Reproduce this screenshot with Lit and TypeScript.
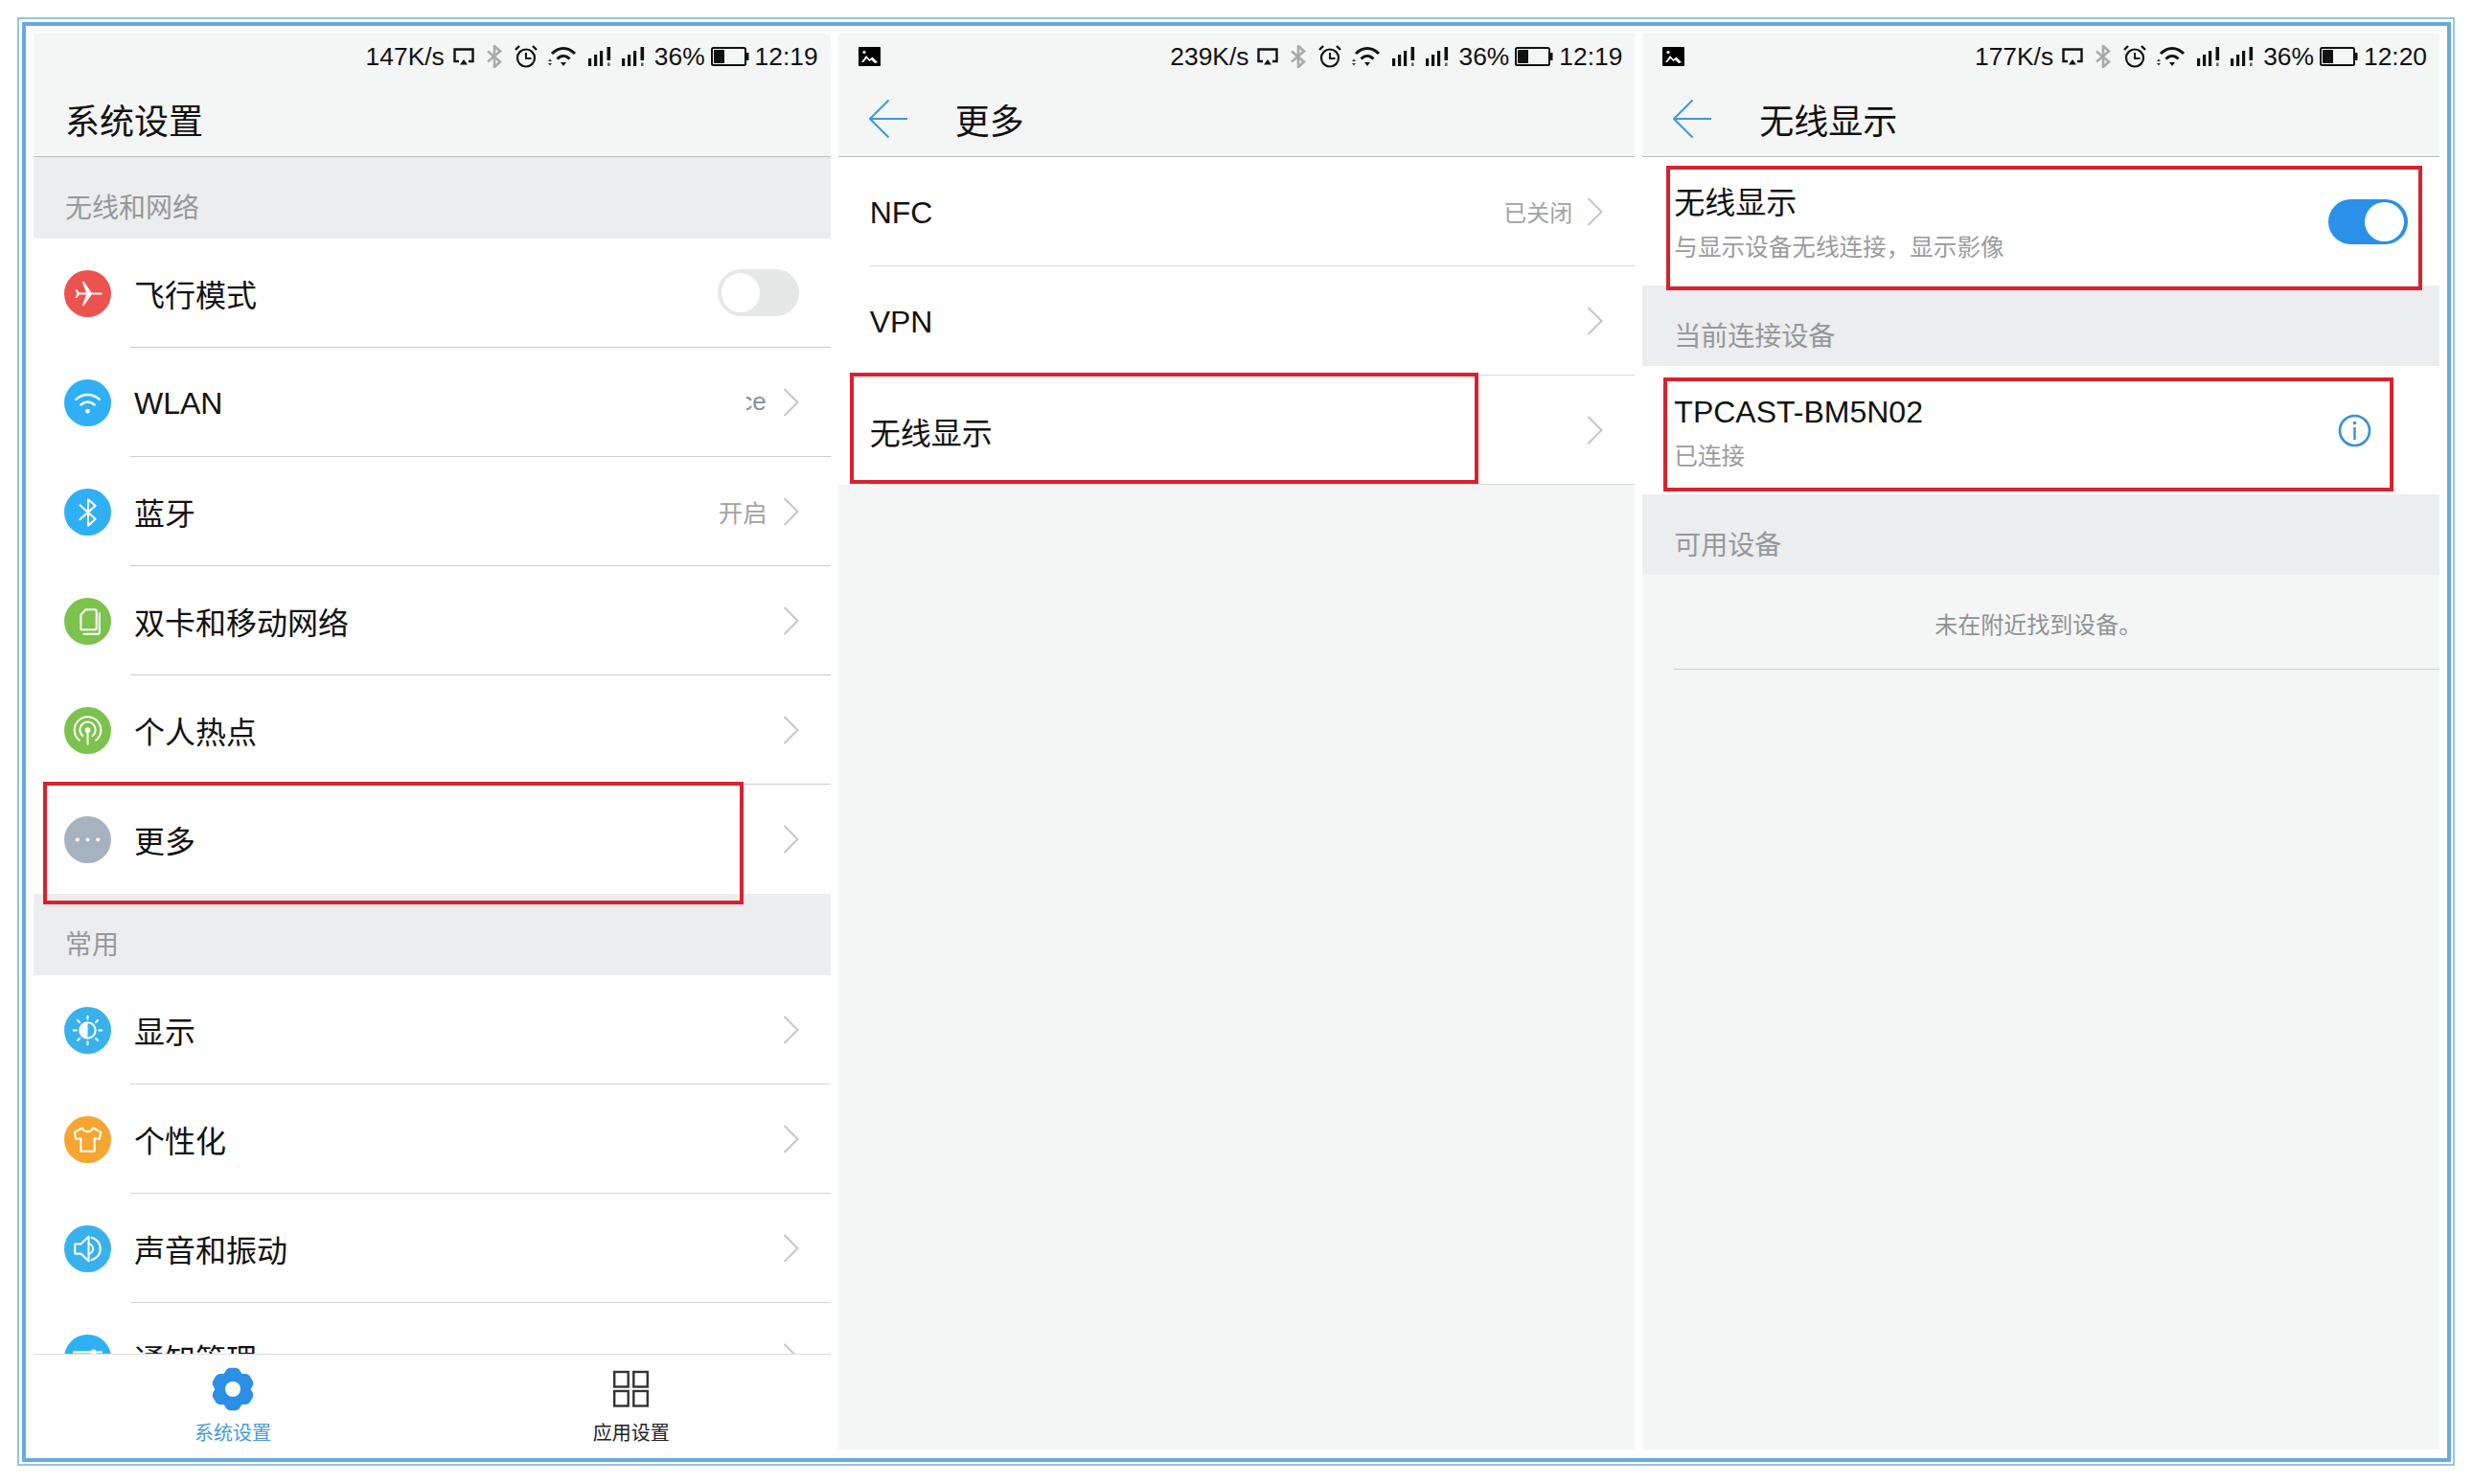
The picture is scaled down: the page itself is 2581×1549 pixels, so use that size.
import { LitElement, html, css, svg } from "lit";
import { customElement } from "lit/decorators.js";

const disc = (color: string, body: unknown) => html`<svg class="disc" viewBox="0 0 48 48">
  <circle cx="24" cy="24" r="24" fill=${color}></circle>
  <g fill="none" stroke="#fff" stroke-width="2" stroke-linecap="round" stroke-linejoin="round">${body}</g>
</svg>`;

const ICONS: Record<string, unknown> = {
  plane: disc("#ec5350", svg`
    <path d="M38 23H28L20 11.500h-1.600L22.500 23H15.500L12.800 19.500h-1.500L13 24l-1.700 4.500h1.500L15.500 25H22.500L18.400 36.500H20L28 25H38c1.300 0 1.300-2 0-2z" fill="#fff" stroke="none"/>`),
  wifi: disc("#2fb0f4", svg`
    <path d="M12 20.500c7-6.500 17-6.500 24 0" stroke-width="2.400"/>
    <path d="M17 26c4.400-3.800 9.600-3.800 14 0" stroke-width="2.400"/>
    <circle cx="24" cy="32.500" r="2.300" fill="#fff" stroke="none"/>`),
  bt: disc("#2fb0f4", svg`
    <path d="M16 17l16 14-7.500 7V11l7.500 6.500-16 14" stroke-width="2"/>`),
  sim: disc("#7cc24e", svg`
    <path d="M17 31V17.500L22 12h9.500c.8 0 1.500.7 1.500 1.500V31c0 .8-.7 1.500-1.500 1.500h-13c-.8 0-1.500-.7-1.500-1.500z" stroke-width="2"/>
    <path d="M36 16v19.500c0 .8-.7 1.500-1.500 1.500H20" stroke-width="2"/>`),
  hotspot: disc("#7cc24e", svg`
    <path d="M15.500 34a13.500 13.500 0 1 1 17 0" stroke-width="2"/>
    <path d="M19 29.500a8 8 0 1 1 10 0" stroke-width="2"/>
    <circle cx="24" cy="23.500" r="2.800" fill="#fff" stroke="none"/>
    <path d="M24 24v14" stroke-width="2"/>`),
  more: disc("#a4b3bf", svg`
    <circle cx="13.500" cy="24" r="2" fill="#fff" stroke="none"/>
    <circle cx="24" cy="24" r="2" fill="#fff" stroke="none"/>
    <circle cx="34.500" cy="24" r="2" fill="#fff" stroke="none"/>`),
  display: disc("#39b1ec", svg`
    <circle cx="24" cy="24" r="8" stroke-width="2"/>
    <path d="M24 16a8 8 0 0 0 0 16z" fill="#fff" stroke="none"/>
    <path d="M24 9.500v3M24 35.500v3M9.500 24h3M35.500 24h3M13.700 13.700l2.100 2.100M32.200 32.200l2.100 2.100M13.700 34.300l2.100-2.100M32.200 15.800l2.100-2.100"/>`),
  shirt: disc("#f7a531", svg`
    <path d="M18.500 12L10.500 16.500 12 23.500l5-.8V36h14V22.700l5 .8 1.500-7L29.500 12c-1 2.600-3 3.800-5.500 3.800S19.500 14.600 18.500 12z" stroke-width="2"/>`),
  sound: disc("#39b1ec", svg`
    <path d="M11 19v10h6l8 7.500v-25L17 19h-6z" stroke-width="2"/>
    <path d="M25 18.500c3 1.200 4.500 3 4.500 5.500s-1.500 4.300-4.500 5.500" stroke-width="2"/>
    <path d="M28 12.500c5.500 2 9 6 9 11.500s-3.500 9.500-9 11.500" stroke-width="2"/>`),
  notify: disc("#2fb0f4", svg`
    <path d="M10 18h21M33 18h5" stroke-width="2.400"/>
    <circle cx="30" cy="18" r="2.800" fill="#fff" stroke="none"/>
    <path d="M10 30h5M19 30h19" stroke-width="2.400"/>
    <circle cx="17" cy="30" r="2.800" fill="#fff" stroke="none"/>`),
};

const chevron = html`<svg class="chev" viewBox="0 0 17 30"><path d="M1.500 1 15.500 15 1.500 29" fill="none" stroke="#c3c5c6" stroke-width="2"></path></svg>`;

const back = html`<svg class="back" viewBox="0 0 40 40"><path d="M20.500 .5 1 20 20.500 39.500M1 20h39" fill="none" stroke="#3f97d6" stroke-width="2"></path></svg>`;

const photo = html`<svg class="photo" viewBox="0 0 23 20"><rect width="23" height="20" rx="1" fill="#000"></rect><path d="M3 16l5-7 3.500 4 3-2.500L20 16l-3 1-3.500-3.500-2 1.500-3-3L5 16z" fill="#fff"></path><circle cx="6" cy="5.500" r="1.600" fill="#fff"></circle></svg>`;

const signal = html`<svg class="sig" viewBox="0 0 26 22">
  <rect x="1" y="13" width="3.200" height="8" fill="#111"></rect>
  <rect x="7" y="9" width="3.200" height="12" fill="#111"></rect>
  <rect x="13" y="5" width="3.200" height="16" fill="#111"></rect>
  <rect x="20.500" y="1" width="3.600" height="14" fill="#111"></rect>
  <rect x="21" y="17.500" width="2.600" height="3.500" fill="#666"></rect>
</svg>`;

const status = (speed: string, time: string, withPhoto = false) => html`<div class="status">
  ${withPhoto ? photo : ""}
  <div class="st-right">
    <span>${speed}</span>
    <svg class="airplay" viewBox="0 0 22 18"><path d="M6 14H1.500V1.500h19V14H16" fill="none" stroke="#111" stroke-width="2.400"></path><path d="M7 17.500h8L11 12z" fill="#111"></path></svg>
    <svg class="btg" viewBox="0 0 24 24"><path d="M5 6.500l13 11L12 23V1l6 5.500-13 11" fill="none" stroke="#aaa" stroke-width="2.600"></path></svg>
    <svg class="alarm" viewBox="0 0 24 24"><circle cx="12" cy="13.500" r="9" fill="none" stroke="#111" stroke-width="2.200"></circle><path d="M12 8v6h5.500" fill="none" stroke="#111" stroke-width="2"></path><path d="M1 5l4-4M23 5l-4-4" stroke="#111" stroke-width="2.400"></path></svg>
    <svg class="wifig" viewBox="0 0 34 22"><path d="M6 8c7-7.500 17-7.500 24 0" fill="none" stroke="#111" stroke-width="3"></path><path d="M11.500 13.500c4-4 9-4 13 0" fill="none" stroke="#111" stroke-width="3"></path><path d="M15 17h6l-3 4z" fill="#111"></path><path d="M2 16l2-2.500L6 16zM2 18l2 2.500L6 18z" fill="#333"></path></svg>
    ${signal}${signal}
    <div class="st-tail">
      <span>36%</span>
      <svg class="batt" viewBox="0 0 40 20"><rect x="1" y="1" width="35" height="18" rx="1.500" fill="none" stroke="#111" stroke-width="2"></rect><rect x="3" y="3" width="11" height="14" fill="#111"></rect><rect x="37" y="6" width="2.500" height="8" fill="#111"></rect></svg>
      <span>${time}</span>
    </div>
  </div>
</div>`;

const gearPoints = () => {
  const pts: string[] = [];
  const cx = 22, cy = 23;
  for (let i = 0; i < 6; i++) {
    const a = (-90 + i * 60) * Math.PI / 180;
    [[-0.3, 20.5], [-0.17, 21.5], [0.17, 21.5], [0.3, 20.5], [0.52, 17.5]].forEach(([d, r]) => {
      pts.push(`${(cx + r * Math.cos(a + d)).toFixed(1)},${(cy + r * Math.sin(a + d)).toFixed(1)}`);
    });
  }
  return pts.join(" ");
};

const MAIN = [
  { icon: "plane", label: "飞行模式", toggle: true },
  { icon: "wifi", label: "WLAN", clip: "ce", latin: true },
  { icon: "bt", label: "蓝牙", value: "开启" },
  { icon: "sim", label: "双卡和移动网络" },
  { icon: "hotspot", label: "个人热点" },
];
const COMMON = [
  { icon: "display", label: "显示" },
  { icon: "shirt", label: "个性化" },
  { icon: "sound", label: "声音和振动" },
  { icon: "notify", label: "通知管理" },
];

@customElement("app-root")
export class AppRoot extends LitElement {
  static styles = css`
    :host {
      display: block;
      width: 2581px;
      height: 1549px;
      box-sizing: border-box;
      padding: 18px 19px 19px 18px;
      background: #fff;
      font-family: "Liberation Sans", "Noto Sans CJK SC", sans-serif;
      color: #111;
    }
    .outer { height: 100%; box-sizing: border-box; border: 2px solid #93c3e8; padding: 3px 2px 2px 3px; }
    .inner { height: 100%; box-sizing: border-box; border: 4px solid #6aa9dc; padding: 8px 8px 9px 8px; }
    .grid { height: 100%; display: grid; grid-template-columns: repeat(3, 1fr); gap: 8px; }
    .panel { position: relative; display: flex; flex-direction: column; min-width: 0; min-height: 0; background: #f4f6f6; }
    .panel.white { background: #fff; }

    .head { flex: none; height: 129px; box-sizing: border-box; background: #f4f6f6; border-bottom: 1px solid #b9bdbf; display: flex; flex-direction: column; }
    .status { height: 48px; flex: none; display: flex; align-items: center; justify-content: space-between; padding: 0 13px 0 21px; font-size: 26.4px; }
    .st-right { margin-left: auto; display: flex; align-items: center; gap: 9px; }
    .st-tail { display: flex; align-items: center; gap: 6px; }
    .photo { width: 23px; height: 20px; }
    .airplay { width: 22px; height: 18px; }
    .btg { width: 24px; height: 24px; }
    .alarm { width: 24px; height: 24px; }
    .wifig { width: 34px; height: 22px; }
    .sig { width: 26px; height: 22px; }
    .batt { width: 40px; height: 20px; }

    .titlebar { flex: 1; display: flex; align-items: center; padding: 2px 0 0 32px; font-size: 36px; }
    .titlebar.plain { padding-left: 33px; }
    .back { width: 40px; height: 40px; margin-right: 50px; flex: none; }

    .list { flex: 1; min-height: 0; overflow: hidden; background: #fff; }
    .section { height: 84px; box-sizing: border-box; padding: 17px 0 0 33px; display: flex; align-items: center; background: #ecedef; color: #96989a; font-size: 28px; }
    .list .section { height: 85px; }
    .row { height: 114px; display: flex; align-items: center; padding-left: 32px; background: #fff; font-size: 32px; }
    .disc { width: 49px; height: 49px; flex: none; margin-right: 20px; }
    .body { flex: 1; align-self: stretch; min-width: 0; box-sizing: border-box; padding: 0 33px 0 4px; display: flex; align-items: center; border-bottom: 1px solid #c9cbcd; }
    .row.end .body { border-bottom: 0; }
    .row.tight .body { border-bottom-color: #d2d4d5; }
    .label { flex: 1; min-width: 0; white-space: nowrap; }
    .label.latin { padding-top: 3px; }
    .value { font-size: 25.5px; color: #a2a3a4; margin-right: 16px; white-space: nowrap; }
    .clip { width: 21px; overflow: hidden; display: flex; justify-content: flex-end; color: #8d8e8f; margin-right: 17px; font-size: 26px; }
    .chev { width: 17px; height: 30px; flex: none; }

    .switch { width: 85px; height: 49px; box-sizing: border-box; border-radius: 25px; background: #e6e8e8; padding: 4px; display: flex; }
    .switch i { display: block; width: 40px; height: 41px; border-radius: 50%; background: #fff; }
    .switch.on { width: 83px; height: 47px; background: #2a90e8; justify-content: flex-end; padding: 3px 4px; }
    .switch.on i { width: 41px; }

    .simple { height: 114px; box-sizing: border-box; display: flex; align-items: center; padding-left: 33px; background: #fff; font-size: 32px; }
    .simple .body { padding-left: 0; border-bottom-color: #d5d7d8; }
    .simple .label { padding-top: 3px; }
    .simple .value { font-size: 24px; margin-right: 15px; }
    .two { height: 134px; box-sizing: border-box; padding: 0 33px; display: flex; align-items: center; background: #fff; }
    .two.device { padding-right: 71px; }
    .two .txt { flex: 1; min-width: 0; padding-top: 8px; }
    .two .t { font-size: 32px; line-height: 40px; }
    .two .s { font-size: 24.6px; line-height: 40px; margin-top: 7px; color: #9a9b9c; }
    .info { width: 35px; height: 35px; flex: none; }
    .none-wrap { padding-left: 33px; background: #f4f6f6; }
    .none { height: 99px; box-sizing: border-box; padding: 2px 39px 0 0; display: flex; align-items: center; justify-content: center; border-bottom: 1px solid #c9cbcd; font-size: 24px; color: #8f9193; }
    .rest { flex: 1; background: #f4f6f6; }

    .tabs { flex: none; height: 100px; box-sizing: border-box; border-top: 1px solid #dcdede; display: grid; grid-template-columns: 1fr 1fr; background: #fff; }
    .tab { display: flex; flex-direction: column; align-items: center; padding-top: 13px; font-size: 20px; color: #222; }
    .tab.active { color: #4a9bd8; }
    .tab svg { height: 46px; }
    .tab span { line-height: 28px; margin-top: 9px; }

    .mark { position: absolute; box-sizing: border-box; border: 4px solid #d7222f; }
    .m1 { left: 10px; top: 781px; width: 731px; height: 128px; }
    .m2 { left: 12px; top: 354px; width: 656px; height: 116px; }
    .m3 { left: 25px; top: 138px; width: 789px; height: 130px; }
    .m4 { left: 22px; top: 359px; width: 762px; height: 119px; }
  `;

  private row(r: any, cls = "") {
    return html`<div class="row ${cls}">
      ${ICONS[r.icon]}
      <div class="body">
        <div class="label ${r.latin ? "latin" : ""}">${r.label}</div>
        ${r.value ? html`<span class="value">${r.value}</span>` : ""}
        ${r.clip ? html`<span class="clip"><span>${r.clip}</span></span>` : ""}
        ${r.toggle ? html`<div class="switch"><i></i></div>` : chevron}
      </div>
    </div>`;
  }

  private simple(label: string, value = "") {
    return html`<div class="simple"><div class="body">
      <div class="label">${label}</div>
      ${value ? html`<span class="value">${value}</span>` : ""}
      ${chevron}
    </div></div>`;
  }

  render() {
    return html`<div class="outer"><div class="inner"><div class="grid">
      <section class="panel white">
        <div class="head">
          ${status("147K/s", "12:19")}
          <div class="titlebar plain">系统设置</div>
        </div>
        <div class="list">
          <div class="section">无线和网络</div>
          ${MAIN.map((r) => this.row(r))}
          ${this.row({ icon: "more", label: "更多" }, "end")}
          <div class="section">常用</div>
          ${COMMON.map((r) => this.row(r, "tight"))}
        </div>
        <div class="tabs">
          <div class="tab active">
            <svg viewBox="0 0 44 46" width="44"><polygon points=${gearPoints()} fill="#2b8fe5" stroke="#2b8fe5" stroke-width="2" stroke-linejoin="round"></polygon><circle cx="22" cy="23" r="8" fill="#fff"></circle></svg>
            <span>系统设置</span>
          </div>
          <div class="tab">
            <svg viewBox="0 0 37 46" width="37"><g fill="none" stroke="#333" stroke-width="2.400"><rect x="1.200" y="5" width="14.500" height="15.500"></rect><rect x="21.300" y="5" width="14.500" height="15.500"></rect><rect x="1.200" y="25" width="14.500" height="15.500"></rect><rect x="21.300" y="25" width="14.500" height="15.500"></rect></g></svg>
            <span>应用设置</span>
          </div>
        </div>
        <div class="mark m1"></div>
      </section>

      <section class="panel">
        <div class="head">
          ${status("239K/s", "12:19", true)}
          <div class="titlebar">${back}更多</div>
        </div>
        ${this.simple("NFC", "已关闭")}
        ${this.simple("VPN")}
        ${this.simple("无线显示")}
        <div class="mark m2"></div>
      </section>

      <section class="panel">
        <div class="head">
          ${status("177K/s", "12:20", true)}
          <div class="titlebar">${back}无线显示</div>
        </div>
        <div class="two">
          <div class="txt"><div class="t">无线显示</div><div class="s">与显示设备无线连接，显示影像</div></div>
          <div class="switch on"><i></i></div>
        </div>
        <div class="section">当前连接设备</div>
        <div class="two device">
          <div class="txt"><div class="t">TPCAST-BM5N02</div><div class="s">已连接</div></div>
          <svg class="info" viewBox="0 0 35 35"><circle cx="17.500" cy="17.500" r="15.500" fill="none" stroke="#3a8fd6" stroke-width="2.600"></circle><circle cx="17.500" cy="9.500" r="1.800" fill="#3a8fd6"></circle><path d="M17.500 14v13" stroke="#3a8fd6" stroke-width="2.400"></path></svg>
        </div>
        <div class="section">可用设备</div>
        <div class="none-wrap"><div class="none">未在附近找到设备。</div></div>
        <div class="rest"></div>
        <div class="mark m3"></div>
        <div class="mark m4"></div>
      </section>
    </div></div></div>`;
  }
}
